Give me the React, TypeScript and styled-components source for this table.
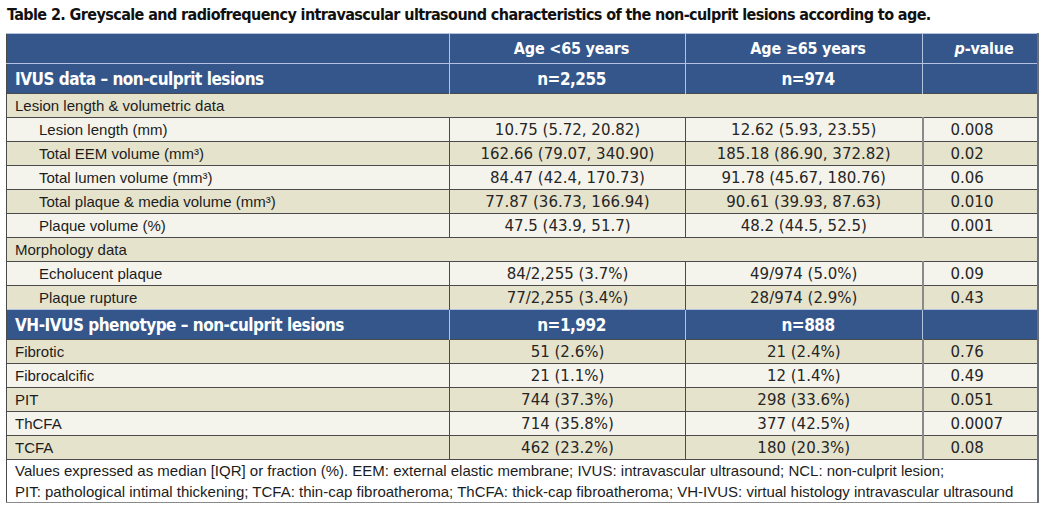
import styled, { createGlobalStyle } from 'styled-components'

// table 2 of the paper: IVUS characteristics of non-culprit lesions by age
const GlobalStyle = createGlobalStyle`
  html, body { margin: 0; padding: 0; background: #fff; }
  body { font-family: "Liberation Sans", Arial, sans-serif; color: #1a1a1a; }
`

type Row = {
  label: string
  a?: string
  b?: string
  p?: string
  kind: 'section' | 'data' | 'blue'
  indent?: boolean
  shade?: 'beige' | 'light'
}

const rows: Row[] = [
  { kind: 'blue', label: 'IVUS data – non-culprit lesions', a: 'n=2,255', b: 'n=974' },
  { kind: 'section', label: 'Lesion length & volumetric data', shade: 'beige' },
  { kind: 'data', indent: true, shade: 'light', label: 'Lesion length (mm)', a: '10.75 (5.72, 20.82)', b: '12.62 (5.93, 23.55)', p: '0.008' },
  { kind: 'data', indent: true, shade: 'beige', label: 'Total EEM volume (mm³)', a: '162.66 (79.07, 340.90)', b: '185.18 (86.90, 372.82)', p: '0.02' },
  { kind: 'data', indent: true, shade: 'light', label: 'Total lumen volume (mm³)', a: '84.47 (42.4, 170.73)', b: '91.78 (45.67, 180.76)', p: '0.06' },
  { kind: 'data', indent: true, shade: 'beige', label: 'Total plaque & media volume (mm³)', a: '77.87 (36.73, 166.94)', b: '90.61 (39.93, 87.63)', p: '0.010' },
  { kind: 'data', indent: true, shade: 'light', label: 'Plaque volume (%)', a: '47.5 (43.9, 51.7)', b: '48.2 (44.5, 52.5)', p: '0.001' },
  { kind: 'section', label: 'Morphology data', shade: 'beige' },
  { kind: 'data', indent: true, shade: 'light', label: 'Echolucent plaque', a: '84/2,255 (3.7%)', b: '49/974 (5.0%)', p: '0.09' },
  { kind: 'data', indent: true, shade: 'beige', label: 'Plaque rupture', a: '77/2,255 (3.4%)', b: '28/974 (2.9%)', p: '0.43' },
  { kind: 'blue', label: 'VH-IVUS phenotype – non-culprit lesions', a: 'n=1,992', b: 'n=888' },
  { kind: 'data', shade: 'beige', label: 'Fibrotic', a: '51 (2.6%)', b: '21 (2.4%)', p: '0.76' },
  { kind: 'data', shade: 'light', label: 'Fibrocalcific', a: '21 (1.1%)', b: '12 (1.4%)', p: '0.49' },
  { kind: 'data', shade: 'beige', label: 'PIT', a: '744 (37.3%)', b: '298 (33.6%)', p: '0.051' },
  { kind: 'data', shade: 'light', label: 'ThCFA', a: '714 (35.8%)', b: '377 (42.5%)', p: '0.0007' },
  { kind: 'data', shade: 'beige', label: 'TCFA', a: '462 (23.2%)', b: '180 (20.3%)', p: '0.08' },
]

export default function App() {
  return (
    <Page>
      <GlobalStyle />
      <Title>
        Table 2. Greyscale and radiofrequency intravascular ultrasound characteristics of the non-culprit lesions according to age.
      </Title>
      <Table>
        <colgroup>
          <col style={{ width: 443 }} />
          <col style={{ width: 236 }} />
          <col style={{ width: 237 }} />
          <col />
        </colgroup>
        <tbody>
          <BlueRow>
            <BlueCell />
            <BlueCell $center>Age &lt;65 years</BlueCell>
            <BlueCell $center>Age ≥65 years</BlueCell>
            <BlueCell $center><i>p</i>-value</BlueCell>
          </BlueRow>
          {rows.map((r, i) => {
            if (r.kind === 'blue') {
              return (
                <BlueRow key={i}>
                  <BlueCell $big>{r.label}</BlueCell>
                  <BlueCell $center $big>{r.a}</BlueCell>
                  <BlueCell $center $big>{r.b}</BlueCell>
                  <BlueCell />
                </BlueRow>
              )
            }
            if (r.kind === 'section') {
              return (
                <DataRow key={i} $shade={r.shade}>
                  <Cell colSpan={4}>{r.label}</Cell>
                </DataRow>
              )
            }
            return (
              <DataRow key={i} $shade={r.shade}>
                <Cell $indent={r.indent}>{r.label}</Cell>
                <NumCell>{r.a}</NumCell>
                <NumCell>{r.b}</NumCell>
                <PCell>{r.p}</PCell>
              </DataRow>
            )
          })}
          <NoteRow>
            <NoteCell colSpan={4}>
              Values expressed as median [IQR] or fraction (%). EEM: external elastic membrane; IVUS: intravascular ultrasound; NCL: non-culprit lesion;
              <br />
              PIT: pathological intimal thickening; TCFA: thin-cap fibroatheroma; ThCFA: thick-cap fibroatheroma; VH-IVUS: virtual histology intravascular ultrasound
            </NoteCell>
          </NoteRow>
        </tbody>
      </Table>
    </Page>
  )
}

const condensed = `"DejaVu Sans Condensed", "Liberation Sans", sans-serif`

const Page = styled.div`
  width: 1045px;
  height: 508px;
  padding: 3px 0 0 6px;
  box-sizing: border-box;
`

const Title = styled.div`
  font-family: ${condensed};
  font-weight: bold;
  font-size: 16px;
  letter-spacing: -0.6px;
  line-height: 24px;
  height: 30px;
  padding-left: 1px;
  color: #111;
  white-space: nowrap;
`

const Table = styled.table`
  width: 1033px;
  table-layout: fixed;
  border-collapse: collapse;
  border-left: 1px solid #4a4a4a;
  border-right: 2px solid #6a6f78;
  border-bottom: 1px solid #8a8a8a;
`

const BlueRow = styled.tr`
  height: 30px;
  background: #34568b;
`

const BlueCell = styled.td<{ $center?: boolean; $big?: boolean }>`
  padding: 0 0 0 8px;
  font-family: ${condensed};
  font-weight: bold;
  font-size: ${p => (p.$big ? '17px' : '16px')};
  letter-spacing: ${p => (p.$big ? '-0.5px' : '-0.2px')};
  color: #fff;
  text-align: ${p => (p.$center ? 'center' : 'left')};
  border-top: 1px solid #b3c3df;
  border-left: 1px solid #b3c3df;
  vertical-align: middle;
  white-space: nowrap;
  &:first-child { border-left: none; }
  i { font-style: italic; }
`

const DataRow = styled.tr<{ $shade?: 'beige' | 'light' }>`
  height: 24px;
  background: ${p => (p.$shade === 'beige' ? '#e6e3cd' : '#f5f4ec')};
`

const Cell = styled.td<{ $indent?: boolean }>`
  padding: 0 0 0 ${p => (p.$indent ? '32px' : '8px')};
  font-size: 15px;
  color: #1c1c1c;
  text-align: left;
  border-top: 1px solid #4a4a4a;
  border-left: 1px solid #4a4a4a;
  vertical-align: middle;
  white-space: nowrap;
`

const NumCell = styled(Cell)`
  padding: 0;
  font-family: "DejaVu Sans", Verdana, sans-serif;
  font-size: 15px;
  color: #262626;
  text-align: center;
`

const PCell = styled(NumCell)`
  padding: 0 0 0 27px;
  text-align: left;
  border-left: 2px solid #8a8a8a;
`

const NoteRow = styled.tr`
  background: #fff;
`

const NoteCell = styled.td`
  padding: 0 0 0 8px;
  font-size: 15px;
  line-height: 21px;
  color: #1c1c1c;
  border-top: 1px solid #4a4a4a;
  white-space: nowrap;
`
